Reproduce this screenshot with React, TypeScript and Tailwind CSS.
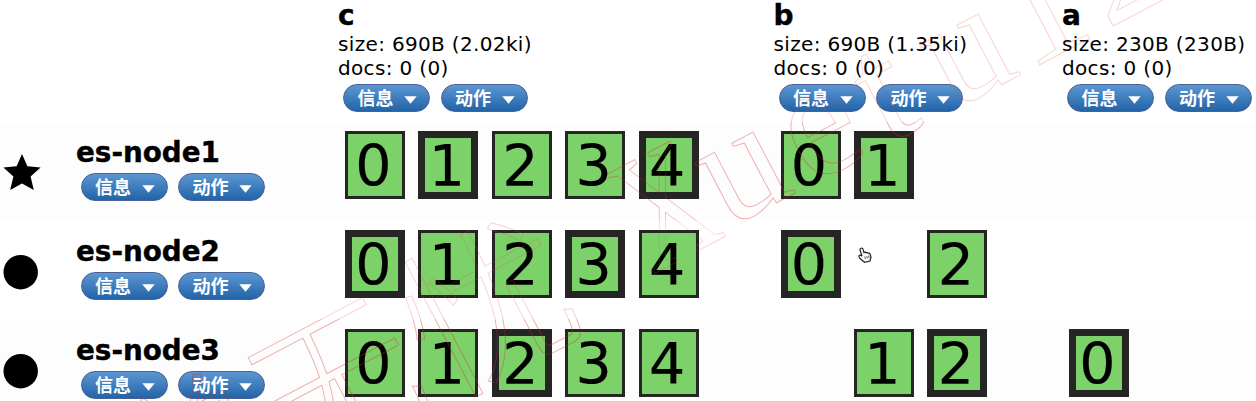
import React from 'react';

type Shard = { id: number; primary?: boolean } | null;

const s = (id: number): Shard => ({ id });
const p = (id: number): Shard => ({ id, primary: true });

const indices = [
  { name: 'c', size: '690B (2.02ki)', width: 'w-[435.5px]' },
  { name: 'b', size: '690B (1.35ki)', width: 'w-[288.5px]' },
  { name: 'a', size: '230B (230B)', width: 'w-[194px]' },
];

const nodes: { name: string; master?: boolean; shards: Shard[][] }[] = [
  { name: 'es-node1', master: true, shards: [[s(0), p(1), s(2), s(3), p(4)], [s(0), p(1), null], [null]] },
  { name: 'es-node2', shards: [[p(0), s(1), s(2), p(3), s(4)], [p(0), null, s(2)], [null]] },
  { name: 'es-node3', shards: [[s(0), s(1), p(2), s(3), s(4)], [null, s(1), p(2)], [p(0)]] },
];

function MenuButton({ label }: { label: string }) {
  return (
    <button className="flex h-7 w-[87px] shrink-0 items-center rounded-full border border-[#4c5f96] bg-linear-to-b from-[#5b97d2] to-[#2164a8] pl-[13px] font-['Liberation_Sans','Noto_Sans_CJK_SC',sans-serif] text-[18px] leading-none font-bold text-white">
      <span className="w-[37px] pt-0.5 whitespace-nowrap">{label}</span>
      <svg className="mt-[3px] ml-[10px] h-2 w-[13px] shrink-0" viewBox="0 0 13 8">
        <path d="M0.3 0.3h12.4L6.5 7.7z" fill="#fff" />
      </svg>
    </button>
  );
}

function Menus() {
  return (
    <div className="flex gap-[10.5px]">
      <MenuButton label="信息" />
      <MenuButton label="动作" />
    </div>
  );
}

function ShardBox({ shard }: { shard: Shard }) {
  if (!shard) return <div className="h-[68px] w-[60px] shrink-0" />;
  return (
    <div
      className={`flex h-[68px] w-[60px] shrink-0 items-center justify-center bg-[#7dd169] pt-0.5 pr-[3px] text-[57px] leading-none [-webkit-text-stroke:0.2px_black] ${
        shard.primary ? 'shadow-[inset_0_0_0_7px_#252525]' : 'shadow-[inset_0_0_0_3px_#252525]'
      }`}
    >
      <span>{shard.id}</span>
    </div>
  );
}

function Watermark() {
  const letters = (
    <g transform="translate(651 271) rotate(-27.7)" strokeWidth="1" fill="none" fontFamily="'Liberation Serif', serif" fontSize="160">
      <text x="0" y="4" fontSize="168" textLength="84" lengthAdjust="spacingAndGlyphs">X</text>
      <text x="87 180 267 341 426 516" y="-2">uetu12</text>
      <text x="-589 -417 -245" y="18" fontFamily="'Noto Sans CJK SC', sans-serif" fontSize="168" fontWeight="300">学无忧</text>
    </g>
  );
  return (
    <svg className="pointer-events-none absolute inset-0" width="1256" height="401" viewBox="0 0 1256 401">
      <defs>
        <clipPath id="shaded"><path d="M0 122h1256v98H0zM0 319h1256v82H0z" /></clipPath>
        <clipPath id="plain"><path d="M0 0h1256v122H0zM0 220h1256v99H0z" /></clipPath>
      </defs>
      <g clipPath="url(#shaded)" stroke="#dc2828" strokeOpacity="0.36">{letters}</g>
      <g clipPath="url(#plain)" stroke="#f04444" strokeOpacity="0.24">{letters}</g>
    </svg>
  );
}

export default function App() {
  return (
    <div className="relative h-[401px] w-[1256px] overflow-hidden bg-white font-['DejaVu_Sans',sans-serif] text-black">
      <div className="flex h-[122px] pl-[338px]">
        {indices.map((index) => (
          <div key={index.name} className={`shrink-0 ${index.width}`}>
            <div className="h-8 text-[28px] leading-8 font-bold [-webkit-text-stroke:0.4px_black]">{index.name}</div>
            <div className="text-[20px] leading-6 tracking-[0.34px] whitespace-nowrap">size: {index.size}</div>
            <div className="text-[20px] leading-6 tracking-[0.34px] whitespace-nowrap">docs: 0 (0)</div>
            <div className="pt-1 pl-[5px]"><Menus /></div>
          </div>
        ))}
      </div>
      {nodes.map((node) => (
        <div key={node.name} className="flex h-[99px] odd:bg-white even:bg-[#fdfdfd]">
          <div className="w-[76px] shrink-0 pt-8 pl-[3px]">
            {node.master ? (
              <svg width="38" height="37" viewBox="0 0 38 37">
                <path d="M19 0l5.4 12.3 13.2 1.2-10 9 3.2 13.5L19 29.5 7.2 36l3.2-13.5-10-9 13.2-1.2z" />
              </svg>
            ) : (
              <svg width="36" height="37" viewBox="0 0 36 37"><circle cx="17.7" cy="19.2" r="17.2" /></svg>
            )}
          </div>
          <div className="w-[269px] shrink-0 pt-[15px]">
            <div className="h-9 text-[27.8px] leading-8 font-bold [-webkit-text-stroke:0.4px_black]">{node.name}</div>
            <div className="pl-[4.5px]"><Menus /></div>
          </div>
          {node.shards.map((group, i) => (
            <div key={i} className={`flex shrink-0 gap-[13.4px] pt-[9px] ${indices[i].width}`}>
              {group.map((shard, j) => <ShardBox key={j} shard={shard} />)}
            </div>
          ))}
        </div>
      ))}
      <Watermark />
      <svg className="absolute top-[247px] left-[858px]" width="16" height="16" viewBox="0 0 16 16">
        <path
          d="M3 1.2c1-.6 1.8.2 2 1l1 3.3c.7-.7 1.7-.5 2 .2.8-.6 1.7-.2 2 .5.8-.4 1.7 0 2 .8l1 3-1 4-5.5 1.3L2 11.5C.8 10 .6 8.7 1.5 8.2c.8-.4 1.7.2 2.5 1L2.1 3C1.8 2.1 2.2 1.5 3 1.2z"
          fill="#fff" stroke="#222" strokeWidth="1.2"
        />
        <path d="M6.8 9.5l.6 2.5M8.8 9l.6 2.5M10.6 8.6l.6 2.5" fill="none" stroke="#333" strokeWidth=".8" />
      </svg>
    </div>
  );
}
